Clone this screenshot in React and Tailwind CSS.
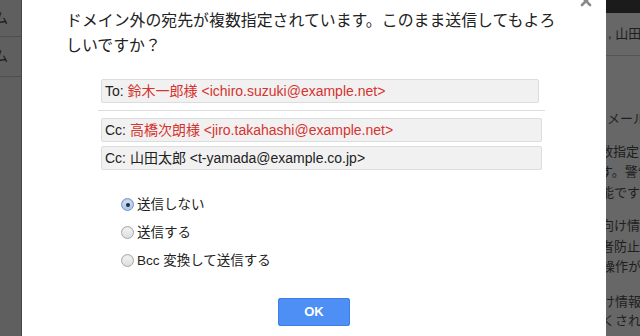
import React from "react";

const ff = { fontFamily: '"Liberation Sans","Noto Sans CJK JP",sans-serif' };

function Radio({ checked }) {
  return checked ? (
    <span className="flex h-[13px] w-[13px] items-center justify-center rounded-full border border-[#6f94c9] bg-gradient-to-b from-[#d5e3f6] to-[#a9c4ea] shadow-[inset_0_1px_1px_rgba(0,0,0,0.15)]">
      <span className="h-[4px] w-[4px] rounded-full bg-[#1f2a3a]" />
    </span>
  ) : (
    <span className="h-[13px] w-[13px] rounded-full border border-[#a8a8a8] bg-gradient-to-b from-[#f6f6f6] to-[#dcdcdc] shadow-[inset_0_1px_1px_rgba(0,0,0,0.08)]" />
  );
}

function Box({ label, children }) {
  return (
    <div className="flex h-[24px] items-center whitespace-nowrap rounded-[2px] border border-[#dcdcdc] bg-[#f1f1f1] pl-[3px] text-[14px] text-[#222]">
      <span>{label}&nbsp;</span>
      {children}
    </div>
  );
}

export default function App() {
  const rightLines = [
    { t: "メール", top: 53, ml: 1 },
    { t: "数指定", top: 86, ml: -6 },
    { t: "す。警告", top: 106, ml: -6 },
    { t: "能です", top: 127, ml: -5 },
    { t: "向け情", top: 160, ml: -5 },
    { t: "者防止", top: 181, ml: -5 },
    { t: "操作が", top: 201, ml: -4 },
    { t: "け情報", top: 236, ml: -4 },
    { t: "くされ", top: 255, ml: -4 },
  ];
  return (
    <div className="flex h-[336px] w-[640px] overflow-hidden bg-white" style={ff}>
      {/* left backdrop */}
      <div className="flex w-[22px] shrink-0 flex-col border-r border-[#474747] bg-[#5f5f5f] text-[14px] text-[#1a1a1a]">
        <div className="flex h-[37px] items-center overflow-hidden border-b border-[#4e4e4e]">
          <span className="ml-[-6px]">ム</span>
        </div>
        <div className="flex h-[40px] items-center overflow-hidden border-b border-[#4e4e4e]">
          <span className="ml-[-6px]">ム</span>
        </div>
        <div className="flex-1" />
      </div>

      {/* dialog */}
      <div className="relative flex w-[584px] shrink-0 flex-col bg-white pl-[44px]">
        <svg className="absolute right-[14px] top-[-5px]" width="12" height="12" viewBox="0 0 12 12">
          <path d="M2 2 L10 10 M10 2 L2 10" stroke="#8a8a8a" strokeWidth="2.6" strokeLinecap="round" />
        </svg>
        <div className="mt-[8px] w-[500px] text-[15.9px] leading-[25px] text-[#222]">
          ドメイン外の宛先が複数指定されています。このまま送信してもよろしいですか？
        </div>

        <div className="ml-[32px] mt-[21px] flex w-[447px] flex-col">
          <div className="w-[441px] pl-[3px]">
            <Box label="To:">
              <span className="text-[#d5332f]">鈴木一郎様 &lt;ichiro.suzuki@example.net&gt;</span>
            </Box>
          </div>
          <div className="mt-[7px] h-px w-[447px] bg-[#dcdcdc]" />
          <div className="mt-[7px] flex w-[444px] flex-col gap-[4px] pl-[3px]">
            <Box label="Cc:">
              <span className="text-[#d5332f]">高橋次朗様 &lt;jiro.takahashi@example.net&gt;</span>
            </Box>
            <Box label="Cc:">
              <span>山田太郎 &lt;t-yamada@example.co.jp&gt;</span>
            </Box>
          </div>
        </div>

        <div className="ml-[55px] mt-[28px] flex flex-col gap-[15px] text-[13.5px] leading-[13px] text-[#222]">
          <label className="flex items-center gap-[3px]">
            <Radio checked />
            <span>送信しない</span>
          </label>
          <label className="flex items-center gap-[3px]">
            <Radio />
            <span>送信する</span>
          </label>
          <label className="flex items-center gap-[3px]">
            <Radio />
            <span>Bcc 変換して送信する</span>
          </label>
        </div>

        <div className="mt-[31px] flex justify-center pr-[44px]">
          <button className="flex h-[28px] w-[72px] items-center justify-center rounded-[2px] border border-[#3f7ee6] bg-[#4d8ff5] text-[13px] font-bold text-white">
            OK
          </button>
        </div>
      </div>

      {/* right backdrop */}
      <div className="flex w-[34px] shrink-0 flex-col overflow-hidden bg-[#676767] text-[13px] leading-[20px] text-[#1e1e1e]">
        <div className="h-[13px] shrink-0 bg-[#1b1b1b]" />
        <div className="flex h-[43px] shrink-0 items-center whitespace-nowrap border-b border-[#555] pl-[2px]">
          , 山田
        </div>
        <div className="relative flex-1">
          {rightLines.map((l, i) => (
            <div
              key={i}
              className="absolute whitespace-nowrap"
              style={{ top: l.top, left: l.ml }}
            >
              {l.t}
            </div>
          ))}
        </div>
      </div>
    </div>
  );
}
